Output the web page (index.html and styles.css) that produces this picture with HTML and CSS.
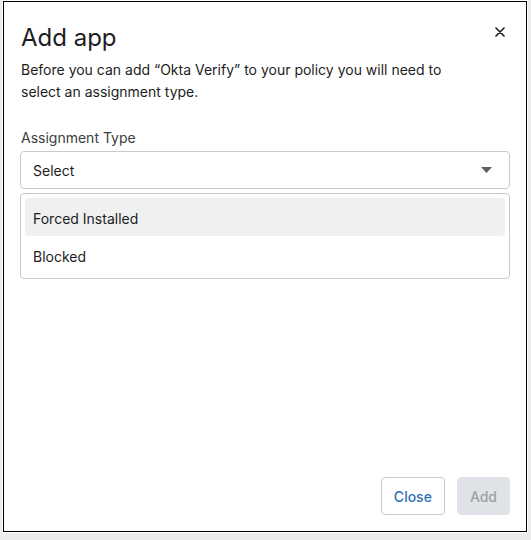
FILE: index.html
```html
<!DOCTYPE html>
<html lang="en">
<head>
    <meta charset="UTF-8">
    <meta name="viewport" content="width=device-width, initial-scale=1.0">
    <link rel="stylesheet" href="styles.css">
</head>
<body>
    <div class="dialog" role="dialog" aria-labelledby="dialog-title">
        <!-- Header -->
        <div class="dialog-header">
            <h1 id="dialog-title" class="dialog-title">Add app</h1>
            <button type="button" class="close-x" aria-label="Close">
                <svg width="10" height="10" viewBox="0 0 10 10" fill="none" stroke="currentColor" stroke-width="1.6" stroke-linecap="round">
                    <path d="M1 1l8 8M9 1L1 9"></path>
                </svg>
            </button>
        </div>

        <p class="dialog-text">Before you can add “Okta Verify” to your policy you will need to select an assignment type.</p>

        <!-- Assignment type field -->
        <div class="field">
            <label class="field-label">Assignment Type</label>
            <div class="select-box">
                <span>Select</span>
                <svg class="caret" width="11" height="6" viewBox="0 0 11 6">
                    <path d="M0 0h11L5.5 6z" fill="#5b5f66"></path>
                </svg>
            </div>
            <ul class="options">
                <li class="option active">Forced Installed</li>
                <li class="option">Blocked</li>
            </ul>
        </div>

        <!-- Footer -->
        <div class="dialog-footer">
            <button type="button" class="btn btn-secondary">Close</button>
            <button type="button" class="btn btn-disabled" disabled>Add</button>
        </div>
    </div>
</body>
</html>
```

FILE: styles.css
```css
html, body {
    margin: 0;
    padding: 0;
}

body {
    height: 540px;
    background: #ececec;
    font-family: Inter, "Noto Sans", sans-serif;
    color: #1d1d21;
}

.dialog {
    box-sizing: border-box;
    display: flex;
    flex-direction: column;
    width: 524px;
    height: 531px;
    margin-left: 3px;
    margin-top: 1px;
    padding: 0 16px 16px 16px;
    background: #fff;
    border: 1px solid #000;
    box-shadow: 0 0 0 1px #fff;
}

.dialog-header {
    display: flex;
    justify-content: space-between;
    align-items: flex-start;
    padding-top: 20px;
    padding-left: 1px;
}

.dialog-title {
    margin: 0;
    font-size: 24px;
    font-weight: 400;
    line-height: 32px;
    color: #1d1d21;
}

.close-x {
    margin-top: 5px;
    margin-right: 5px;
    padding: 0;
    border: 0;
    background: none;
    color: #1d1d21;
    line-height: 0;
    cursor: pointer;
}

.dialog-text {
    max-width: 440px;
    margin: 5px 0 0;
    padding-left: 1px;
    font-size: 14px;
    line-height: 22px;
    color: #1d1d21;
}

.field {
    margin-top: 24px;
}

.field-label {
    display: block;
    padding-left: 1px;
    font-size: 14px;
    line-height: 22px;
    color: #3a3d42;
}

.select-box {
    box-sizing: border-box;
    display: flex;
    justify-content: space-between;
    align-items: center;
    height: 38px;
    margin-top: 2px;
    padding: 0 17px 0 12px;
    border: 1px solid #c7cbd1;
    border-radius: 4px;
    font-size: 14px;
    color: #1d1d21;
}

.options {
    box-sizing: border-box;
    list-style: none;
    margin: 4px 0 0;
    padding: 4px;
    border: 1px solid #c7cbd1;
    border-radius: 4px;
}

.option {
    height: 36px;
    padding: 2px 8px 0;
    border-radius: 4px;
    font-size: 14px;
    line-height: 38px;
    color: #1d1d21;
}

.option.active {
    background: #eff0f2;
}

.dialog-footer {
    display: flex;
    justify-content: flex-end;
    gap: 12px;
    margin-top: auto;
}

.btn {
    box-sizing: border-box;
    height: 38px;
    padding: 0 12px;
    border-radius: 4px;
    font-family: inherit;
    font-size: 14px;
    font-weight: 500;
}

.btn-secondary {
    background: #fff;
    border: 1px solid #c7cbd1;
    color: #2f6fb5;
}

.btn-disabled {
    background: #dfe2e6;
    border: 1px solid #dfe2e6;
    color: #9ca1a8;
}
```
